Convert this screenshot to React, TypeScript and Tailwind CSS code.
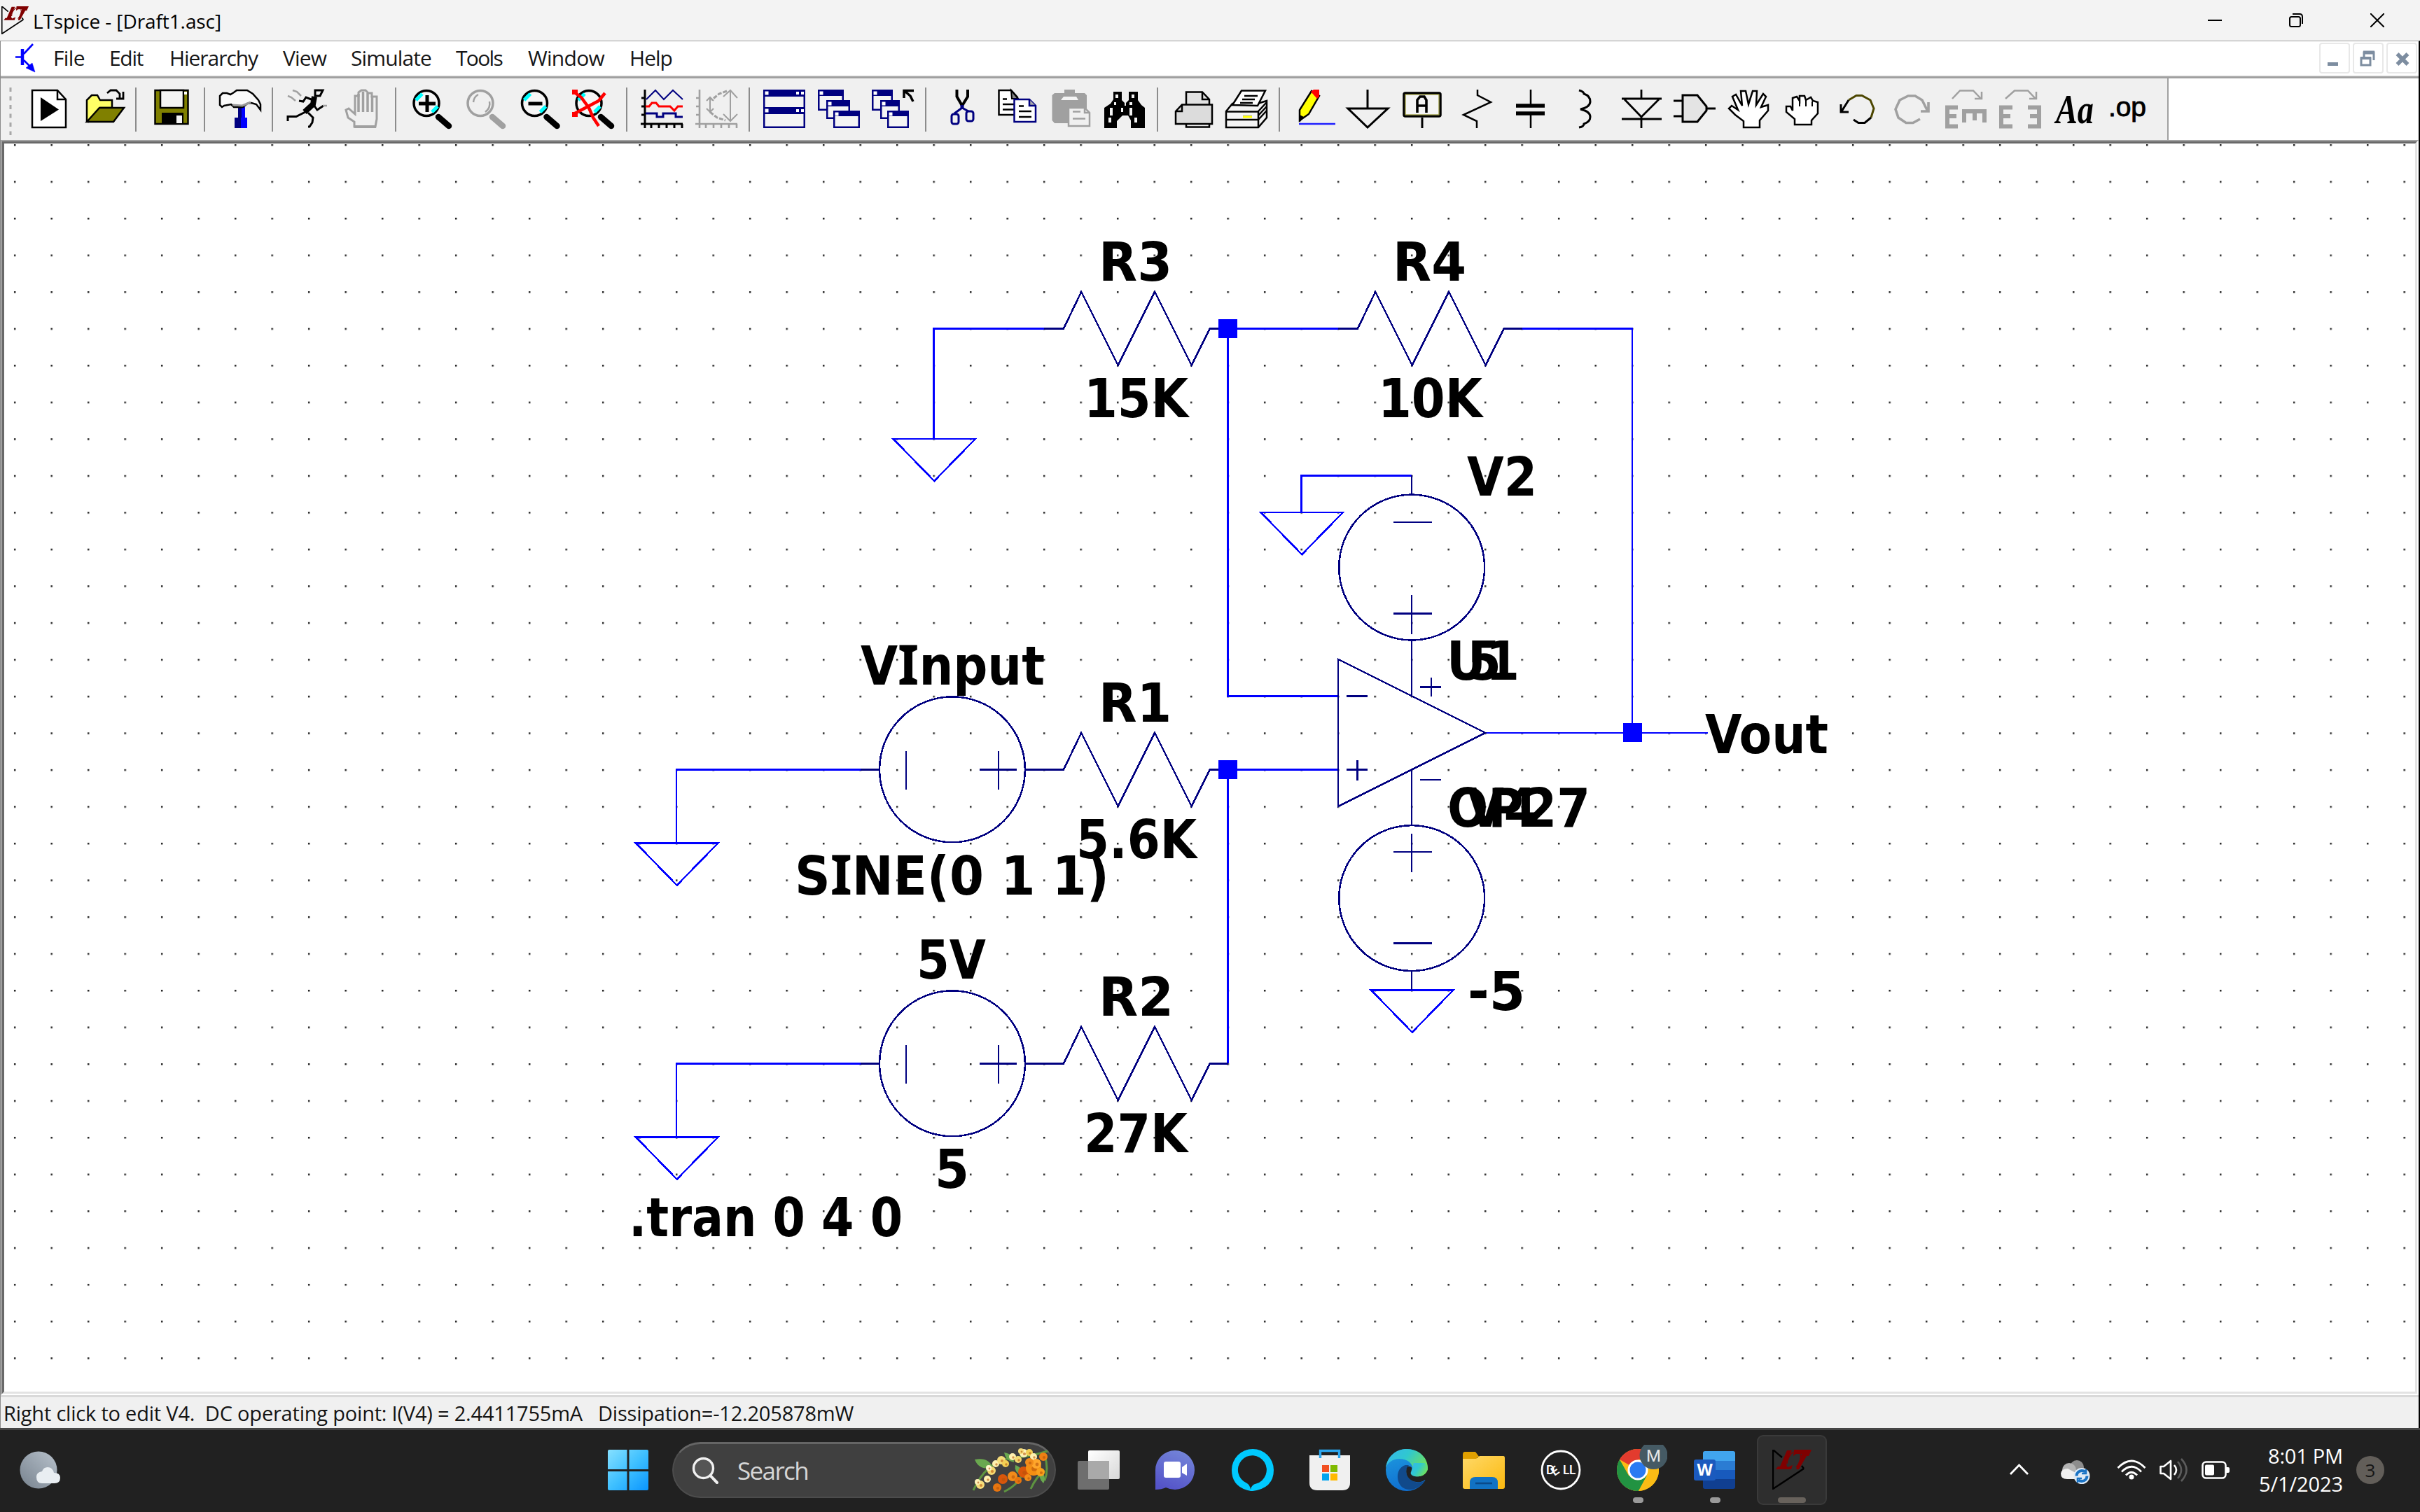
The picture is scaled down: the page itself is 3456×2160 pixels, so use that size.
import { useLayoutEffect, useRef, useState, type ReactNode } from "react";

/* Text run whose letter spacing is adjusted so that it spans a given width. */
function Fit({ w, className = "", children }: { w: number; className?: string; children: string }) {
  const ref = useRef<HTMLSpanElement>(null);
  const [spacing, setSpacing] = useState(0);
  useLayoutEffect(() => {
    if (ref.current) setSpacing((w - ref.current.getBoundingClientRect().width) / children.length);
  }, [w, children]);
  return (
    <span ref={ref} className={"inline-block whitespace-pre " + className} style={{ letterSpacing: `${spacing}px` }}>
      {children}
    </span>
  );
}

/* ---------- Title bar ---------- */

function LtLogo({ className, shaft }: { className: string; shaft: string }) {
  return (
    <svg className={className} viewBox="0 0 56 57" preserveAspectRatio="none">
      <path d="M1 0V56L45 27M1 0L14 11" fill="none" stroke={shaft} strokeWidth="2.4" />
      <path d="M45 27L42 23" fill="none" stroke={shaft} strokeWidth="2.4" />
      <path d="M21 1H28L21 16Q19 22 22 25L29 22L27 28H5L8 24H11Z" fill="#800000" />
      <path d="M31 0H56L52 9H49L38 28H34L42 6H34L30 9Z" fill="#800000" />
      <path d="M30 3C25 7 21 14 21 20M40 6C42 14 39 20 34 25" fill="none" stroke="#800000" strokeWidth="1.6" />
    </svg>
  );
}

function TitleBar() {
  return (
    <header className="flex h-[58px] shrink-0 items-center bg-[#f3f3f3]">
      <LtLogo className="ml-[2px] h-[40px] w-[39px]" shaft="#000" />
      <Fit w={269} className="ml-[6px] pt-[2px] text-[28px] leading-[56px] text-black">
        LTspice - [Draft1.asc]
      </Fit>
      <div className="ml-auto flex h-full items-center gap-[96px] pr-[51px] text-black">
        <svg className="h-5 w-5" viewBox="0 0 20 20"><path d="M0 10H20" stroke="currentColor" strokeWidth="2" /></svg>
        <svg className="h-5 w-5" viewBox="0 0 20 20" fill="none" stroke="currentColor" strokeWidth="2">
          <rect x="1" y="5" width="15" height="14" rx="2.5" />
          <path d="M5 1H15Q19 1 19 5V15" />
        </svg>
        <svg className="h-5 w-5" viewBox="0 0 20 20"><path d="M0 0L20 20M20 0L0 20" stroke="currentColor" strokeWidth="2" /></svg>
      </div>
    </header>
  );
}

/* ---------- Menu bar ---------- */

const menus: [string, number, string][] = [
  ["File", 45, "w-[80px]"],
  ["Edit", 48, "w-[86px]"],
  ["Hierarchy", 126, "w-[162px]"],
  ["View", 62, "w-[97px]"],
  ["Simulate", 115, "w-[150px]"],
  ["Tools", 66, "w-[103px]"],
  ["Window", 109, "w-[145px]"],
  ["Help", 61, "w-[80px]"],
];

function MdiButton({ children }: { children: ReactNode }) {
  return (
    <div className="flex h-[44px] w-[44px] items-center justify-center rounded-[4px] border-2 border-[#e8e8e8] bg-white">
      <svg className="h-[40px] w-[40px]" viewBox="0 0 40 40" fill="none" stroke="#7d8da0">{children}</svg>
    </div>
  );
}

function MenuBar() {
  return (
    <nav className="flex h-[48px] shrink-0 items-center bg-white">
      <svg className="ml-[19px] h-[42px] w-[32px] shrink-0" viewBox="20 60 32 42" fill="none" stroke="#0000ff">
        <path d="M32 68V91" strokeWidth="4.500" />
        <path d="M22 79.500H32M34 75L47 61M34 84L45 95" strokeWidth="2.600" />
        <path d="M50 101L37 95L46 88Z" fill="#0000ff" strokeWidth="0.500" />
      </svg>
      <div className="ml-[24px] flex">
        {menus.map(([label, w, cell]) => (
          <div key={label} className={cell}>
            <Fit w={w} className="text-[30px] leading-[46px] text-[#161616]">{label}</Fit>
          </div>
        ))}
      </div>
      <div className="ml-auto flex gap-1 pr-[2px]">
        <MdiButton><path d="M10 28.500H25" strokeWidth="5" /></MdiButton>
        <MdiButton>
          <path d="M14 18V12H28V23" strokeWidth="3" />
          <path d="M13 12H29" strokeWidth="5" />
          <rect x="10" y="20" width="13" height="10" strokeWidth="3" fill="#fff" />
          <path d="M9 20H24" strokeWidth="4" />
        </MdiButton>
        <MdiButton><path d="M13.500 14L28.500 29M28.500 14L13.500 29" strokeWidth="5.500" /></MdiButton>
      </div>
    </nav>
  );
}

/* ---------- Toolbar ---------- */

function Magnifier({ dx, color, glint = true, children }: { dx: number; color: string; glint?: boolean; children?: ReactNode }) {
  return (
    <g transform={`translate(${dx} 0)`}>
      <circle cx="609" cy="147.500" r="18" fill={glint ? "#f6f6f6" : "none"} stroke={color} strokeWidth="3.500" />
      {glint && <path d="M594 143L603 134M617 160L625 152" stroke="#00ffff" strokeWidth="5" />}
      {!glint && <path d="M599 146Q600 138 606 135M616 160Q624 154 622 145" stroke={color} strokeWidth="2.500" />}
      <path d="M626 167L641 180" stroke={color} strokeWidth="8.500" strokeLinecap="round" />
      {children}
    </g>
  );
}

function MiniWindow({ x, y, w, h, bar }: { x: number; y: number; w: number; h: number; bar: number }) {
  return (
    <g>
      <rect x={x + 1.25} y={y + 1.25} width={w - 2.5} height={h - 2.5} fill="#f4f4f4" stroke="#000080" strokeWidth="2.500" />
      <rect x={x} y={y} width={w} height={bar} fill="#000080" />
      <rect x={x + 2.5} y={y + 2.5} width="5" height="5" fill="#fff" />
    </g>
  );
}

const gray = "#a0a0a0";

/* Each tool is drawn in window coordinates: [id, left edge, cell width, width class, artwork]. */
const tools: [string, number, number, string, ReactNode][] = [
  ["grip", 1, 39, "w-[39px]", <path d="M15 125V193" stroke="#a8a8a8" strokeWidth="3" strokeDasharray="6 6.500" />],
  ["new", 40, 75, "w-[75px]", <g>
    <path d="M46 129H82L94 142V182H46Z" fill="#fff" stroke="#000" />
    <path d="M82 129V142H94" stroke="#000" />
    <path d="M58 139L84 156.500L58 173Z" fill="#000" />
  </g>],
  ["open", 115, 78, "w-[78px]", <g>
    <path d="M124 173V143L131 136H139L143 143H160V154H143L126 174Z" fill="#ffff66" stroke="#000" />
    <path d="M124 174L142 154H177L162 174Z" fill="#808000" stroke="#000" />
    <path d="M153 133L158 129H166L171 134V140M176 131V141H166" stroke="#000" strokeWidth="2.800" />
  </g>],
  ["sep1", 193, 25, "w-[25px]", null],
  ["save", 218, 73, "w-[73px]", <g>
    <rect x="221.500" y="129" width="47" height="48" fill="#808000" stroke="#000" />
    <rect x="229" y="129" width="33" height="25" fill="#f4f4f4" stroke="#000" />
    <rect x="263" y="131" width="4" height="4" fill="#fff" />
    <rect x="231" y="161" width="31" height="16" fill="#000" />
    <rect x="252" y="165" width="8" height="11" fill="#f4f4f4" />
  </g>],
  ["sep2", 291, 17, "w-[17px]", null],
  ["hammer", 308, 80, "w-[80px]", <g>
    <path d="M340 153H345V168H344V183H335V168H340Z" fill="#000080" />
    <path d="M345 153H350V168H353V183H344V168H345Z" fill="#0000ff" />
    <path d="M314 137L318 133H324L329 135L334 132L338 129H353L361 134L369 143L372 149V157L366 149L359 147L353 148L347 153H334L330 149L320 151L317 153L314 150Z" fill="#fafafa" stroke="#000" />
    <path d="M332 150L346 151L358 146" stroke="#999" strokeWidth="3" />
  </g>],
  ["sep3", 388, 17, "w-[17px]", null],
  ["run", 405, 80, "w-[80px]", <g stroke="#000">
    <path d="M450 129H461L457 137H450Z" strokeWidth="3" />
    <path d="M449 138L447 149L435 160" strokeWidth="8" />
    <path d="M447 143L437 139L433 145L427 144M448 150L453 157L462 151M436 160L423 166.500H411V173M440 161L447 168L446 175L442 181H440" strokeWidth="3" />
    <path d="M418 129L424 131L430 137M411 137L416 139L422 144M461 151H467" stroke={gray} />
  </g>],
  ["halt", 485, 79, "w-[79px]", <g stroke={gray} strokeWidth="3">
    <path d="M506 181V174L497 168L494 157L498 155L507 163V137H512V132L516 129H522L526 133H531V138H538V170L536 181Z" />
    <path d="M512 134V160M518.500 131V160M525 133V160M531.500 137V160" strokeWidth="3.500" />
    <path d="M506 181H537" strokeWidth="4" />
  </g>],
  ["sep4", 564, 21, "w-[21px]", null],
  ["zoomin", 585, 77, "w-[77px]", <Magnifier dx={0} color="#000"><path d="M598 148H622M610 136V160" stroke="#000" strokeWidth="5" /></Magnifier>],
  ["zoomarea", 662, 77, "w-[77px]", <Magnifier dx={77} color={gray} glint={false} />],
  ["zoomout", 739, 76, "w-[76px]", <Magnifier dx={154.5} color="#000"><path d="M600 148H620" stroke="#000" strokeWidth="5" /></Magnifier>],
  ["zoomfit", 815, 79, "w-[79px]", <g>
    <Magnifier dx={232} color="#000" />
    <path d="M864 133L855 144L838 153L819 163M819 131L830 139L841 154L847 168L855 180" stroke="#ff0000" strokeWidth="4.500" />
    <path d="M817 128H825V135H817ZM817 160H825V167H817Z" fill="#ff0000" />
  </g>],
  ["sep5", 894, 19, "w-[19px]", null],
  ["plot", 913, 77, "w-[77px]", <g>
    <path d="M921 128V183M915 177H975M916 140H921M916 152H921M916 164H921M930 177V183M941 177V183M952 177V183M963 177V183M974 177V183" stroke="#000" strokeWidth="3" />
    <path d="M923 142L936 129L948 142L961 129L975 142" stroke="#000080" strokeWidth="2" />
    <path d="M922 152H927L931 147H937L941 152H957L963 158L968 152H975" stroke="#ff0000" strokeWidth="3" />
    <path d="M922 162H938V167H947V162H965V167H975" stroke="#000080" strokeWidth="3" />
  </g>],
  ["plot2", 990, 79, "w-[79px]", <g stroke={gray}>
    <path d="M999 128V183M993 177H1053M994 140H999M994 152H999M994 164H999M1008 177V183M1019 177V183M1030 177V183M1041 177V183M1052 177V183" strokeWidth="2.600" />
    <path d="M1043 129V172M1033 138L1043 129L1053 140M1033 163L1043 173L1053 163M1014 140V160M1009 144L1014 139L1019 144M1009 155L1014 160L1019 155" strokeWidth="2" />
    <path d="M1038 130L1027 134L1016 143M1014 160L1024 168L1036 172" strokeWidth="3" strokeDasharray="6 2" />
  </g>],
  ["sep6", 1069, 17, "w-[17px]", null],
  ["tile", 1086, 77, "w-[77px]", <g>
    <MiniWindow x={1090} y={128} w={60} h={28} bar={10} />
    <MiniWindow x={1090} y={153} w={60} h={30} bar={10} />
    <path d="M1137 133H1141M1144 133H1148M1137 158H1141M1144 158H1148" stroke="#fff" strokeWidth="4" />
  </g>],
  ["cascade", 1163, 77, "w-[77px]", <g>
    <MiniWindow x={1168} y={128} w={37} h={30} bar={9} />
    <MiniWindow x={1180} y={143} w={34} h={27} bar={9} />
    <MiniWindow x={1190} y={158} w={38} h={25} bar={8} />
  </g>],
  ["closeall", 1240, 81, "w-[81px]", <g>
    <MiniWindow x={1245} y={128} w={30} h={30} bar={9} />
    <MiniWindow x={1257} y={143} w={28} h={27} bar={9} />
    <MiniWindow x={1267} y={158} w={31} h={25} bar={8} />
    <path d="M1291 140V129.500H1305M1293 131L1300 137L1304 145" stroke="#000" strokeWidth="3.500" />
  </g>],
  ["sep7", 1321, 30, "w-[30px]", null],
  ["cut", 1351, 70, "w-[70px]", <g>
    <path d="M1366.500 128V138L1374 151M1382 128V138L1374 151" stroke="#000" strokeWidth="4" />
    <path d="M1374 150V156" stroke="#000080" strokeWidth="5" />
    <rect x="1359" y="163" width="10" height="14" rx="3" stroke="#000080" strokeWidth="3" />
    <rect x="1380" y="159" width="10" height="14" rx="3" stroke="#000080" strokeWidth="3" />
    <path d="M1374 154L1363 162M1374 154L1383 159" stroke="#000080" strokeWidth="3" />
  </g>],
  ["copy", 1421, 78, "w-[78px]", <g>
    <path d="M1426.500 129H1444L1453 139V164H1426.500Z" fill="#fff" stroke="#000" />
    <path d="M1444 129L1454 141H1445Z" fill="#888" stroke="#000" strokeWidth="2" />
    <path d="M1432 141.500H1438M1432 149H1448M1432 156.500H1448" stroke="#000" />
    <path d="M1448.500 142H1470L1479 151V174H1448.500Z" fill="#fff" stroke="#000080" />
    <path d="M1470 142V151H1479" fill="#aaa" stroke="#000080" />
    <path d="M1455 151.500H1462M1455 159H1473M1455 167H1473" stroke="#000" />
  </g>],
  ["paste", 1499, 75, "w-[75px]", <g>
    <path d="M1520 128H1535V133H1549L1552 136V176H1506L1502.500 172V136L1506 133H1520Z" fill={gray} />
    <path d="M1519 138H1537L1540 143H1515Z" fill="#f4f4f4" />
    <path d="M1526 154H1549L1556 161V180H1526Z" fill="#f0f0f0" stroke={gray} />
    <path d="M1549 154V161H1556M1532 159.500H1543M1532 169.500H1550" stroke={gray} />
  </g>],
  ["find", 1574, 78, "w-[78px]", <g>
    <path d="M1590 131H1602V143L1606 147V151H1608V147L1612 143V131H1625V143L1630 150L1635 154V183H1615V172L1611 165H1603L1595 173V183H1577V154L1586 148L1590 142Z" fill="#000" />
    <path d="M1593 135H1597V140H1593ZM1616 135H1620V140H1616ZM1591 146H1594V150H1591ZM1613 146H1617V150H1613ZM1585 154H1589V165H1585ZM1601 154H1604V160H1601ZM1613 154H1617V165H1613ZM1583 168H1587V175H1583ZM1620 168H1624V175H1620Z" fill="#f4f4f4" />
  </g>],
  ["sep8", 1652, 22, "w-[22px]", null],
  ["print", 1674, 72, "w-[72px]", <g stroke="#000">
    <path d="M1694 149V131.500H1717L1727 142V149" fill="#e2e2e2" />
    <path d="M1717 131.500V142H1727" />
    <path d="M1679 159L1688 149.500H1731V177H1679Z" fill="#dcdcdc" />
    <path d="M1688 150V159H1679" />
    <path d="M1694 177V181.500H1727V177" />
  </g>],
  ["setup", 1746, 80, "w-[80px]", <g stroke="#000">
    <path d="M1751 159L1760 148H1796L1809 144V168L1797 182H1751Z" fill="#f4f4f4" />
    <path d="M1760 150L1773 129.500H1807L1796 151Z" fill="#fff" />
    <path d="M1751 159.500H1797V182M1751 171H1797M1797 159L1809 146M1797 171L1809 158M1797 165L1809 152M1777 137H1796M1774 142H1792M1771 147H1789" />
    <path d="M1775 165H1788" stroke="#c8c8c8" strokeWidth="2" />
    <path d="M1775 167H1788" stroke="#ffff00" strokeWidth="3" />
  </g>],
  ["sep9", 1826, 24, "w-[24px]", null],
  ["wire", 1850, 70, "w-[70px]", <g>
    <path d="M1856 172V157L1873 130L1884 137L1869 163Z" fill="#ffff00" stroke="#000" />
    <path d="M1872 131L1876 128H1884V138L1881 141Z" fill="#ff0000" />
    <path d="M1856 164L1862 167L1856 175Z" fill="#000" />
    <path d="M1855 177H1907" stroke="#2020ff" strokeWidth="2.500" />
  </g>],
  ["gnd", 1920, 78, "w-[78px]", <path d="M1953 128V154M1925 155H1982L1953 182Z" stroke="#000" strokeWidth="3" />],
  ["label", 1998, 86, "w-[86px]", <g stroke="#000">
    <rect x="2005" y="133" width="52" height="33" rx="2" fill="#f4f4f4" strokeWidth="3.500" />
    <rect x="2007" y="135" width="48" height="29" stroke="#8b8b28" strokeWidth="1.200" />
    <path d="M2031 168V183" strokeWidth="3" />
    <path d="M2024 161V143L2028 138H2034L2037 143V161M2024 151H2037" strokeWidth="3.600" />
  </g>],
  ["res", 2084, 76, "w-[76px]", <path d="M2110 128V136L2129 146L2090 164L2109 173V183" stroke="#000" />],
  ["cap", 2160, 88, "w-[88px]", <path d="M2186 128V149M2186 164V183" stroke="#000" />],
  ["ind", 2248, 62, "w-[62px]", <path d="M2255 129Q2262 131 2262 134Q2271 137 2271 145Q2271 153 2257 156Q2271 159 2271 167Q2271 174 2262 177Q2262 181 2255 182" stroke="#000" strokeWidth="3" />],
  ["diode", 2310, 76, "w-[76px]", <path d="M2344 128V140M2316 141H2373M2320 142L2344 167L2369 142M2344 167V183M2316 170H2373" stroke="#000" strokeWidth="2.800" />],
  ["gate", 2386, 78, "w-[78px]", <path d="M2390 144H2402M2390 166H2402M2437 155H2450M2403 136V174H2424L2437 158V152L2424 136Z" fill="#e4e4e4" stroke="#000" strokeWidth="3" />],
  ["move", 2464, 80, "w-[80px]", <path d="M2490 182V173L2478 164L2469 155L2473 151L2482 157L2474 138L2479 135L2488 151L2486 130H2493L2497 149L2503 130H2509L2508 150L2518 134L2522 138L2515 153L2525 150V158L2513 172V182Z" fill="#fff" stroke="#000" />],
  ["drag", 2544, 78, "w-[78px]", <g stroke="#000">
    <path d="M2563 178V170L2551 160V152H2557L2560 158V140L2566 138L2570 144V137H2577L2579 143L2586 139L2589 144L2596 146V162L2587 172V178Z" fill="#fff" />
    <path d="M2570 144V152M2579 143V152M2588 145V152" strokeWidth="2" />
  </g>],
  ["undo", 2622, 78, "w-[78px]", <g strokeWidth="3">
    <path d="M2640 143L2651 136.500H2659L2671 143L2676 155L2672 168" stroke="#4c4600" />
    <path d="M2629 149V160H2640M2630 159L2640 143M2672 168L2663 175.500H2654L2647 171" stroke="#000" />
  </g>],
  ["redo", 2700, 72, "w-[72px]", <path d="M2754 146V159H2743M2753 159L2745 143L2735 137H2725L2713 143L2707 156L2711 168L2722 175.500H2732L2742 170" stroke={gray} strokeWidth="3.600" />],
  ["rotate", 2772, 79, "w-[79px]", <g stroke={gray}>
    <path d="M2788 141L2799 129.500H2818L2829 141M2820 141H2830V131" />
    <path d="M2796 153.500H2781V180.500H2796M2781 166H2794" strokeWidth="6" />
    <path d="M2802 159H2837M2805 159V175M2820 159V172M2834 159V175" strokeWidth="6" />
  </g>],
  ["mirror", 2851, 78, "w-[78px]", <g stroke={gray}>
    <path d="M2864 141L2877 129.500H2896L2907 141M2898 141H2908V131" />
    <path d="M2874 153.500H2858V180.500H2874M2858 166H2871" strokeWidth="6" />
    <path d="M2896 153.500H2912V180.500H2896M2912 166H2899" strokeWidth="6" />
  </g>],
  ["text", 2929, 79, "w-[79px]", <text x="2936" y="176" textLength="54" lengthAdjust="spacingAndGlyphs" fontFamily="Liberation Serif, serif" fontStyle="italic" fontWeight="700" fontSize="60" fill="#000">Aa</text>],
  ["op", 3008, 87, "w-[87px]", <text x="3011" y="166" textLength="54" lengthAdjust="spacing" fontFamily="Liberation Sans, sans-serif" fontSize="39" fill="#000" stroke="#000" strokeWidth="0.900">.op</text>],
];

function Toolbar() {
  return (
    <div className="flex h-[88px] shrink-0 bg-white">
      <div className="flex w-[3096px] border-r-2 border-[#a0a0a0] bg-[#f0f0f0]">
        {tools.map(([id, x, w, cls, art]) =>
          id.startsWith("sep") ? (
            <div key={id} className={cls + " shrink-0 pt-[13px]"}>
              <div className="h-[63px] w-[2px] bg-[#8c8c8c]" />
            </div>
          ) : (
            <svg key={id} className={cls + " h-[88px] shrink-0"} viewBox={`${x} 112 ${w} 88`} fill="none" strokeWidth="2.500">
              {art}
              {id === "cap" && <path d="M2165 151H2206M2165 162H2206" stroke="#000" strokeWidth="5.500" />}
            </svg>
          )
        )}
      </div>
    </div>
  );
}

/* ---------- Schematic (one unit = one grid step) ---------- */

const wire = "#0000ff";
const part = "#000080";

const Ground = ({ x, y }: { x: number; y: number }) => (
  <path d={`M${x - 1.11} ${y}H${x + 1.13}L${x + 0.01} ${y + 1.15}Z`} stroke={wire} />
);

const Resistor = ({ x, y }: { x: number; y: number }) => (
  <path d={`M${x} ${y}h.53l.48 -1l1 2l1 -2l1 2l.5 -1h.49`} stroke={part} />
);

const SourceH = ({ y }: { y: number }) => (
  <g stroke={part}>
    <circle cx="25.500" cy={y} r="1.980" />
    <path d={`M23 ${y}h.5M27.500 ${y}h.5M24.240 ${y - 0.5}v1.050M26.250 ${y}h1M26.760 ${y - 0.5}v1.050`} />
  </g>
);

const SourceV = ({ y, sign }: { y: number; sign: number }) => (
  <g stroke={part}>
    <circle cx="38" cy={y} r="1.980" />
    <path d={`M37.500 ${y - 1.23 * sign}h1.050M37.500 ${y + 1.26 * sign}h1.050M38 ${y + 1.26 * sign - 0.5}v1.050`} />
  </g>
);

const Node = ({ x, y }: { x: number; y: number }) => <rect x={x - 0.26} y={y - 0.26} width=".520" height=".520" fill={wire} />;

/* [text, x, baseline, advance width] in window pixels */
const labels: [string, number, number, number][] = [
  ["R3", 1569, 400.7, 105],
  ["15K", 1548, 596, 149],
  ["R4", 1989, 400.7, 105],
  ["10K", 1968, 596, 149],
  ["V2", 2095, 708.3, 100],
  ["U1", 2066, 970.8, 104],
  ["5", 2095, 970.8, 49],
  ["OP27", 2067, 1180.5, 204],
  ["V4", 2095, 1180.5, 100],
  ["Vout", 2435, 1075.8, 176],
  ["-5", 2096, 1443, 82],
  ["R1", 1569, 1030.5, 104],
  ["5.6K", 1537, 1225.5, 172],
  ["5V", 1309, 1398, 99],
  ["R2", 1569, 1450.7, 107],
  ["27K", 1548, 1645.7, 148],
  ["5", 1335, 1697, 49],
  [".tran 0 4 0", 898, 1766, 391],
];

function Schematic() {
  return (
    <svg className="block h-[1783px] w-[3443px]" viewBox="6 205 3443 1783" fill="none">
      <defs>
        <pattern id="grid" x="19.950" y="206" width="52.500" height="52.520" patternUnits="userSpaceOnUse">
          <rect width="2.500" height="2.500" fill="#222" />
        </pattern>
      </defs>
      <rect x="6" y="205" width="3443" height="1783" fill="url(#grid)" />
      <g transform="translate(21.200 206.800) scale(52.500)" strokeWidth=".048" shapeRendering="crispEdges">
        <g stroke={wire}>
          <path d="M28 5H25V8M33 5H36M41 5H44V16H40M44 16H46.060M33 5V15H36M33 17H36M33 17V25" />
          <path d="M23 17H18V19M23 25H18V27M38 9H35V10" />
        </g>
        <Ground x={25} y={8} />
        <Ground x={35} y={10} />
        <Ground x={18} y={19} />
        <Ground x={18} y={27} />
        <Ground x={38} y={23} />
        <Resistor x={28} y={5} />
        <Resistor x={36} y={5} />
        <Resistor x={28} y={17} />
        <Resistor x={28} y={25} />
        <SourceH y={17} />
        <SourceH y={25} />
        <SourceV y={11.5} sign={1} />
        <SourceV y={20.5} sign={-1} />
        <g stroke={part}>
          <path d="M38 9V9.500M38 13.500V15M38 17V18.500M38 22.500V23" />
          <path d="M36 14V18L40 16ZM36.220 15H36.800M36.220 17H36.800M36.520 16.750V17.300M38.220 14.760H38.800M38.530 14.500V15.020M38.220 17.280H38.800" />
        </g>
        <Node x={33} y={5} />
        <Node x={33} y={17} />
        <Node x={44} y={16} />
      </g>
      <g fill="#000" fontFamily="DejaVu Sans Condensed, DejaVu Sans, sans-serif" fontStretch="condensed" fontWeight="700" fontSize="76.400">
        {labels.map(([t, x, y, w]) => (
          <text key={t + x + y} x={x} y={y} textLength={w} lengthAdjust="spacingAndGlyphs">{t}</text>
        ))}
        <text x="1229" y="978.300" textLength="263" lengthAdjust="spacingAndGlyphs">
          V<tspan fontFamily="Noto Sans, sans-serif" fontSize="78">I</tspan>nput
        </text>
        <text x="1135" y="1278" textLength="449" lengthAdjust="spacingAndGlyphs">
          S<tspan fontFamily="Noto Sans, sans-serif" fontSize="78">I</tspan>NE(0 1 1)
        </text>
      </g>
    </svg>
  );
}

/* ---------- Taskbar ---------- */

const blossoms: [number, number, number, string][] = [
  [12, 52, 6, "#f6dc7a"], [8, 48, 4, "#fff3b8"], [22, 44, 5, "#fff0b0"], [28, 32, 6, "#f4d870"], [24, 28, 4, "#fff6cc"],
  [34, 22, 5, "#fff0b0"], [42, 17, 6, "#f6dc7a"], [48, 22, 5, "#f2cf55"], [58, 12, 5, "#fff0b0"], [66, 16, 5, "#f4d870"],
  [74, 7, 6, "#fff3b8"], [82, 6, 5, "#f2cf55"], [88, 12, 5, "#fff0b0"], [70, 4, 4, "#f6dc7a"],
  [36, 56, 6, "#e8750f"], [44, 44, 7, "#d9560b"], [58, 40, 7, "#f28c1a"], [66, 46, 5, "#e8750f"], [74, 34, 8, "#d9560b"],
  [88, 28, 11, "#f58f12"], [92, 22, 7, "#ffa62b"], [82, 20, 6, "#f28c1a"], [102, 12, 6, "#f07f13"], [98, 34, 6, "#f9a01b"],
  [80, 42, 5, "#f28c1a"],
];

function SearchBox() {
  return (
    <div className="flex h-[80px] w-[548px] items-center rounded-full border-2 border-t-[3px] border-[#4c4c4c] border-t-[#656565] bg-[#404040]">
      <svg className="ml-[26px] h-[40px] w-[38px]" viewBox="0 0 38 40" fill="none" stroke="#f0f0f0" strokeWidth="3.400">
        <circle cx="16.500" cy="16.500" r="14" fill="#555" />
        <path d="M26.500 27L36 37" strokeWidth="4" strokeLinecap="round" />
      </svg>
      <Fit w={101} className="ml-[27px] text-[35px] leading-[70px] text-[#d6d6d6]">Search</Fit>
      <svg className="mr-[6px] ml-auto h-[64px] w-[112px]" viewBox="0 0 112 64">
        <path d="M2 60Q20 20 54 14Q84 12 108 4M46 62Q70 50 74 30M84 58Q92 40 104 32M104 46Q110 30 104 10" fill="none" stroke="#5e9440" strokeWidth="3" />
        <path d="M4 16Q24 12 30 28Q10 32 4 16ZM46 6Q60 8 60 20Q48 18 46 6ZM62 24Q74 28 70 38Q60 34 62 24ZM96 30Q108 40 102 50Q94 42 96 30Z" fill="#6aa84f" />
        {blossoms.map(([x, y, r, c]) => (
          <g key={`${x}-${y}`}>
            <circle cx={x} cy={y} r={r} fill={c} />
            <circle cx={x + 1} cy={y + 1} r={r * 0.35} fill="#b5540a" opacity=".6" />
          </g>
        ))}
      </svg>
    </div>
  );
}

function TaskItem({ children, open = false }: { children: ReactNode; open?: boolean }) {
  return (
    <div className="flex w-[110px] flex-col items-center pt-[21px]">
      <svg className="h-[72px] w-[84px]" viewBox="-42 -36 84 72" fill="none">{children}</svg>
      {open && <div className="mt-[3px] h-[8px] w-[15px] rounded-full bg-[#9a9a9a]" />}
    </div>
  );
}

function TaskIcons() {
  return (
    <div className="ml-[6px] flex h-full">
      <TaskItem>
        <rect x="-30" y="-13" width="45" height="41" rx="2" fill="#6e6e6e" />
        <rect x="-15" y="-28" width="45" height="41" rx="2" fill="url(#tv)" />
        <rect x="-15" y="-13" width="30" height="26" fill="#a9a9a9" />
      </TaskItem>
      <TaskItem>
        <path d="M-29 28V0A28 28 0 1 1 -1 28Q-8 28 -14 25Q-20 28 -29 28Z" fill="url(#teams)" />
        <rect x="-17" y="-12" width="24" height="23" rx="3" fill="#fff" />
        <path d="M9 -4L16 -9V8L9 4Z" fill="#fff" />
      </TaskItem>
      <TaskItem>
        <path d="M-5 29.500Q-30 24 -30 0A30 30 0 0 1 0 -30A30 30 0 0 1 30 0Q30 26 0 30Q-3 30 -5 29.500ZM-3 28Q-2 21 5 19.500A20.500 20.500 0 1 0 -9 18.500Q-4 21 -3 28Z" fill="#00caff" fillRule="evenodd" />
      </TaskItem>
      <TaskItem>
        <path d="M-29 -21H29V18Q29 29 18 29H-18Q-29 29 -29 18Z" fill="#f0f0f0" />
        <path d="M-13.500 -17V-27.500H13.500V-17" stroke="#2ba6ee" strokeWidth="3.400" />
        <path d="M-11 -7H-1V3H-11Z" fill="#f25022" /><path d="M1 -7H11V3H1Z" fill="#7fba00" />
        <path d="M-11 5H-1V15H-11Z" fill="#00a4ef" /><path d="M1 5H11V15H1Z" fill="#ffb900" />
      </TaskItem>
      <TaskItem>
        <circle r="30" fill="url(#edgeBlue)" />
        <path d="M-30 -3C-28 -20 -15 -30 0 -30C18 -30 30 -17 30 -3C30 8 20 11 12 9C5 8 6 3 8 0C10 -7 3 -16 -11 -16C-20 -16 -28 -10 -30 -3Z" fill="url(#edgeGreen)" />
        <path d="M-2 -7C-16 -3 -16 17 -6 25C4 32 20 26 26 15C16 21 4 16 0 7C-2 2 0 -4 3 -7Z" fill="#114a8b" />
        <path d="M1 -5C7 -6 9 -2 7 3C5 8 12 10 18 9C26 8 29 2 31 -3V14H26C16 21 4 16 0 7Q-2 0 1 -5Z" fill="#212121" />
        <path d="M6 3C4 8 12 10 18 9C26 8 30 2 30 -3L26 -10L10 -10Z" fill="url(#edgeGreen)" />
      </TaskItem>
      <TaskItem>
        <path d="M-30 -22Q-30 -26 -27 -26H-12L-6 -18H-10V-12H-30Z" fill="#e0a000" />
        <path d="M-30 -16H-11L-6 -20H28Q30 -20 30 -17V24Q30 27 27 27H-27Q-30 27 -30 24Z" fill="url(#folder)" />
        <path d="M-20 27V18Q-20 10 -12 10H12Q20 10 20 18V27Z" fill="#1172c4" />
        <path d="M-12 19H12" stroke="#0a4a8a" strokeWidth="2.600" />
      </TaskItem>
      <TaskItem>
        <circle r="27" stroke="#fff" strokeWidth="2.800" />
        <text x="-21 -9 3 12" y="6 9 6 6" rotate="0 -35 0 0" fontFamily="Inter, sans-serif" fontWeight="600" fontSize="17" fill="#fff">DELL</text>
      </TaskItem>
      <TaskItem open>
        <circle r="30" fill="#fbbc15" />
        <path d="M0 0L-26 -15A30 30 0 0 1 26 -15L0 -14Z" fill="#e33b2e" />
        <path d="M-26 -15A30 30 0 0 0 1 30L13 8L-13 8Z" fill="#229342" />
        <path d="M26 -15H0V0L13 8L1 30A30 30 0 0 0 26 -15Z" fill="#fbbc15" />
        <circle r="14.500" fill="#fff" /><circle r="11.500" fill="#2a7af2" />
        <circle cx="22.500" cy="-21" r="20" fill="#455a64" />
        <text x="22.500" y="-12.500" textAnchor="middle" fontFamily="Roboto, sans-serif" fontSize="24" fill="#e6e6e6">M</text>
      </TaskItem>
      <TaskItem open>
        <path d="M-17 -24Q-17 -27 -14 -27H26Q29 -27 29 -24V-13H-17Z" fill="#41a5ee" />
        <path d="M-17 -13H29V0H-17Z" fill="#2b7cd3" /><path d="M-17 0H29V13H-17Z" fill="#185abd" />
        <path d="M-17 13H29V24Q29 27 26 27H-14Q-17 27 -17 24Z" fill="#103f91" />
        <rect x="-30" y="-15" width="31" height="30" rx="3" fill="#1b5abe" />
        <text x="-14.500" y="8" textAnchor="middle" fontFamily="Open Sans, sans-serif" fontWeight="700" fontSize="23" fill="#fff">W</text>
      </TaskItem>
      <div className="mt-[7px] ml-[5px] flex h-[100px] w-[100px] shrink-0 flex-col items-center rounded-[9px] border-2 border-[#3a3a3a] bg-[#2e2e2e] pt-[19px]">
        <LtLogo className="h-[57px] w-[56px]" shaft="#000" />
        <div className="mt-[11px] h-[8px] w-[40px] rounded-full bg-[#68625c]" />
      </div>
    </div>
  );
}

function Tray() {
  return (
    <div className="ml-auto flex items-center text-white">
      <svg className="h-[40px] w-[322px]" viewBox="2868 2080 322 40" fill="none" stroke="#fff" strokeWidth="3">
        <path d="M2871 2106L2883.500 2093L2896 2106" strokeWidth="2.800" />
        <g stroke="none">
          <circle cx="2966" cy="2096" r="10" fill="#8d8d8d" />
          <circle cx="2955" cy="2100" r="10" fill="#b4b4b4" />
          <path d="M2943 2105Q2944 2098 2953 2098L2968 2106V2113H2952Q2943 2113 2943 2105Z" fill="#f0f0f0" />
          <circle cx="2973" cy="2108.500" r="11.500" fill="#dfeaf5" />
        </g>
        <circle cx="2973" cy="2108.500" r="7.500" stroke="#1a73c4" strokeWidth="4" strokeDasharray="17 6.500" />
        <path d="M2979 2099V2105H2973M2967 2118V2112H2973" stroke="#1a73c4" strokeWidth="2.600" />
        <path d="M3024.500 2097Q3044 2077 3063.500 2097M3030 2102.500Q3044 2088 3058 2102.500M3036 2107.500Q3044 2099 3052 2107.500" strokeWidth="2.800" />
        <circle cx="3044" cy="2110" r="3.500" fill="#fff" stroke="none" />
        <path d="M3085.500 2095H3090L3100 2087V2113L3090 2105H3085.500Z" strokeWidth="2.600" strokeLinejoin="round" />
        <path d="M3105 2093Q3111 2100 3105 2107" strokeWidth="2.600" />
        <path d="M3110 2088Q3120 2100 3110 2112M3115 2084Q3130 2100 3115 2116" stroke="#5c5c5c" strokeWidth="2.600" />
        <rect x="3145.500" y="2088.500" width="33" height="23" rx="5" strokeWidth="2.600" />
        <rect x="3149" y="2092.500" width="13" height="15" rx="2" fill="#fff" stroke="none" />
        <path d="M3179 2096H3182Q3184 2096 3184 2098V2102Q3184 2104 3182 2104H3179Z" fill="#fff" stroke="none" />
      </svg>
      <div className="flex w-[156px] flex-col items-end text-[29px] leading-[40px]">
        <Fit w={107}>8:01 PM</Fit>
        <Fit w={120}>5/1/2023</Fit>
      </div>
      <div className="mr-[51px] ml-[19px] flex h-[40px] w-[40px] items-center justify-center rounded-full bg-[#625e59] text-[26px] leading-[40px] text-[#161616]">
        3
      </div>
    </div>
  );
}

function Taskbar() {
  return (
    <footer className="flex h-[120px] shrink-0 items-center border-t-[3px] border-[#454545] bg-[#212121] pb-[3px]">
      <svg className="h-0 w-0" aria-hidden="true">
        <defs>
          <linearGradient id="tv" x1="0" y1="0" x2="1" y2="1"><stop stopColor="#fff" /><stop offset="1" stopColor="#d8d8d8" /></linearGradient>
          <linearGradient id="teams" x1="0.700" y1="0" x2="0.300" y2="1"><stop stopColor="#7384d8" /><stop offset="1" stopColor="#5453c8" /></linearGradient>
          <linearGradient id="win" x1="0" y1="0" x2="1" y2="1"><stop stopColor="#86e0ff" /><stop offset=".5" stopColor="#3fc0ff" /><stop offset="1" stopColor="#0a95ff" /></linearGradient>
          <linearGradient id="edgeBlue" x1="0" y1="0" x2="0.300" y2="1"><stop stopColor="#1f9de0" /><stop offset="1" stopColor="#0f6fd0" /></linearGradient>
          <linearGradient id="edgeGreen" x1="0" y1="0" x2="1" y2="0.500"><stop stopColor="#35b5ee" /><stop offset=".5" stopColor="#30c8cf" /><stop offset="1" stopColor="#6ee05c" /></linearGradient>
          <linearGradient id="folder" x1="0" y1="0" x2="1" y2="1"><stop stopColor="#ffd968" /><stop offset="1" stopColor="#fbb90f" /></linearGradient>
          <linearGradient id="moon" x1="1" y1="0" x2="0" y2="1"><stop stopColor="#b8c2cc" /><stop offset="1" stopColor="#77828e" /></linearGradient>
        </defs>
      </svg>
      <svg className="ml-[28px] h-[56px] w-[60px]" viewBox="28 2072 60 56">
        <circle cx="55" cy="2100" r="26.500" fill="url(#moon)" />
        <path d="M60 2119Q52 2119 52 2110Q52 2103 60 2102Q62 2096 68 2096Q75 2096 77 2104Q86 2104 86 2111Q86 2119 78 2119Z" fill="#e9eef2" />
      </svg>
      <svg className="ml-[780px] h-[58px] w-[58px]" viewBox="0 0 58 58">
        <path d="M2 0H27.500V28H0V2Q0 0 2 0ZM30.500 0H56Q58 0 58 2V28H30.500ZM0 31H27.500V58H2Q0 58 0 56ZM30.500 31H58V56Q58 58 56 58H30.500Z" fill="url(#win)" />
      </svg>
      <div className="ml-[34px]"><SearchBox /></div>
      <TaskIcons />
      <Tray />
    </footer>
  );
}

export default function App() {
  return (
    <div className="flex h-[2160px] w-[3456px] flex-col overflow-hidden bg-white font-['Open_Sans','Noto_Sans',sans-serif]">
      <TitleBar />
      <main className="flex h-[1982px] shrink-0 flex-col border-t border-r-2 border-l border-t-[#a0a0a0] border-r-black border-l-[#8a8a8a]">
        <MenuBar />
        <div className="h-[5px] shrink-0 border-b-[3px] border-[#a0a0a0] bg-[#f0f0f0]" />
        <Toolbar />
        <div className="h-[1793px] shrink-0 border-2 border-t-[#a0a0a0] border-r-white border-b-white border-l-[#a0a0a0]">
          <div className="h-full border-[3px] border-t-[#696969] border-r-[#e3e3e3] border-b-[#e3e3e3] border-l-[#696969] bg-white">
            <Schematic />
          </div>
        </div>
        <div className="flex h-[47px] shrink-0 items-center border-t-[3px] border-[#d9d9d9] bg-[#f0f0f0] pl-[4px]">
          <Fit w={1214} className="pt-[2px] text-[29px] leading-[42px] text-[#141414]">
            {"Right click to edit V4.  DC operating point: I(V4) = 2.4411755mA   Dissipation=-12.205878mW"}
          </Fit>
        </div>
      </main>
      <Taskbar />
    </div>
  );
}
